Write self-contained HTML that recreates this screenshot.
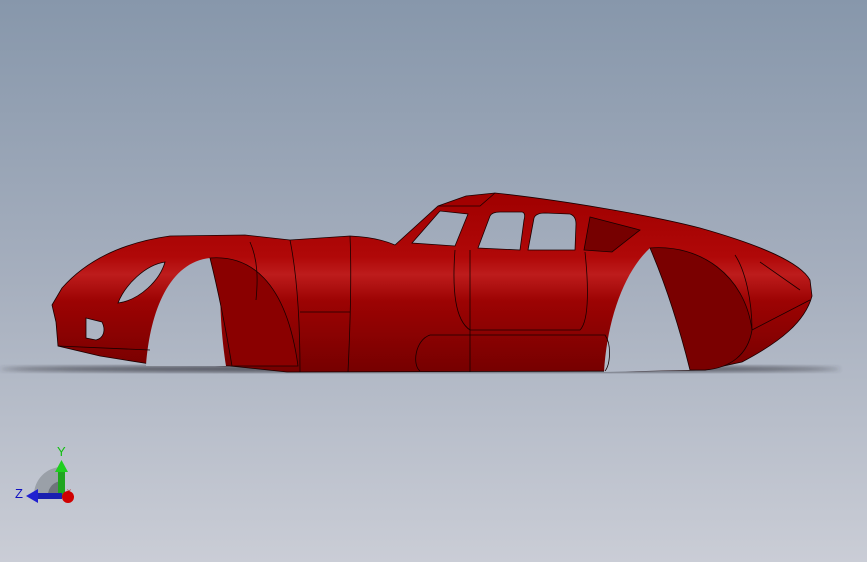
<!DOCTYPE html>
<html><head><meta charset="utf-8"><style>
html,body{margin:0;padding:0;width:867px;height:562px;overflow:hidden}
svg{display:block}
</style></head><body>
<svg width="867" height="562" viewBox="0 0 867 562" xmlns="http://www.w3.org/2000/svg">
<defs>
<linearGradient id="bg" gradientUnits="userSpaceOnUse" x1="0" y1="0" x2="0" y2="562">
<stop offset="0" stop-color="#8797ab"/><stop offset="0.5" stop-color="#a6afbe"/><stop offset="1" stop-color="#cacdd6"/>
</linearGradient>
<linearGradient id="body" gradientUnits="userSpaceOnUse" x1="0" y1="195" x2="0" y2="372">
<stop offset="0" stop-color="#a00000"/><stop offset="0.35" stop-color="#b00808"/><stop offset="0.45" stop-color="#bd1c1c"/><stop offset="0.6" stop-color="#9c0303"/><stop offset="1" stop-color="#760000"/>
</linearGradient>
<filter id="bl"><feGaussianBlur stdDeviation="2.5"/></filter>
</defs>
<rect width="867" height="562" fill="url(#bg)"/>
<ellipse cx="420" cy="369" rx="420" ry="3.5" fill="#30333a" opacity="0.75" filter="url(#bl)"/>
<g stroke="#1a0000" stroke-width="0.8">
<path fill="url(#body)" d="M52,305 L62,288 C85,262 120,243 170,236 L245,235 L290,240 L350,236 C372,237 386,241 395,245 L438,206 L466,196 L495,193 C560,200 650,215 700,228 C760,245 800,262 810,280 L812,296 C805,322 780,342 742,362 L705,370 L632,371 L287,372 L230,366 L150,364 L100,356 L58,346 L56,322 Z"/>
<path fill="url(#bg)" stroke="none" d="M146,366 C150,310 170,262 210,258 L222,262 C218,300 222,340 226,366 Z"/>
<path fill="#8a0000" d="M210,258 C248,255 286,278 298,366 L232,366 C226,330 218,290 210,258 Z"/>
<path fill="url(#bg)" stroke="none" d="M604,372 C607,320 624,272 650,248 C668,290 680,330 690,370 Z"/>
<path fill="#7a0000" d="M650,248 C700,244 745,275 752,330 C748,355 730,368 705,370 L690,370 C680,330 668,290 650,248 Z"/>
<path fill="url(#bg)" d="M412,243 L440,211 L468,214 L455,246 Z"/>
<path fill="url(#bg)" d="M478,248 L490,216 Q492,212 500,212 L522,212 Q526,213 524,220 L520,250 Z"/>
<path fill="url(#bg)" d="M528,250 L534,218 Q536,213 545,213 L570,214 Q576,216 576,224 L575,250 Z"/>
<path fill="#760000" d="M584,250 L590,217 L640,230 L612,252 Z"/>
<path fill="url(#bg)" d="M118,303 C125,285 145,265 165,262 C160,280 140,300 118,303 Z"/>
<path fill="url(#bg)" d="M86,318 L102,322 C106,330 104,338 96,340 L86,338 Z"/>
<path fill="none" d="M350,236 C352,280 350,330 348,372 M455,250 C452,290 455,320 470,330 L580,330 C590,320 588,280 585,252 M430,335 L605,335 C612,345 610,365 605,371 M430,335 C415,340 412,365 420,371 M470,250 L470,372 M290,240 C298,280 300,330 300,372 M250,242 C258,260 258,280 256,300 M735,255 C745,270 752,300 752,330 M760,262 L800,290 M58,346 L150,350 M300,312 L350,312 M752,330 L810,300 M495,193 L480,206 L438,206"/>
</g>
<path d="M62,495 L62,467 A28,28 0 0 0 34,495 Z" fill="#9aa0a8"/>
<path d="M62,495 L62,481 A14,14 0 0 0 48,495 Z" fill="#6f747c"/>
<rect x="58" y="470" width="7" height="26" fill="#1fa51f"/>
<path d="M55,472 L61.5,460 L68,472 Z" fill="#1fcf1f"/>
<rect x="36" y="493" width="26" height="6" fill="#1a1fb0"/>
<path d="M38,489 L26,496 L38,503 Z" fill="#2020d0"/>
<circle cx="68" cy="497" r="6" fill="#d00000"/>
<text x="57" y="456" font-family="Liberation Sans, sans-serif" font-size="13" fill="#10c010">Y</text>
<text x="15" y="498" font-family="Liberation Sans, sans-serif" font-size="13" fill="#1010c0">Z</text>
<text x="67" y="494" font-family="Liberation Sans, sans-serif" font-size="8" fill="#c00000">x</text>
</svg>
</body></html>
